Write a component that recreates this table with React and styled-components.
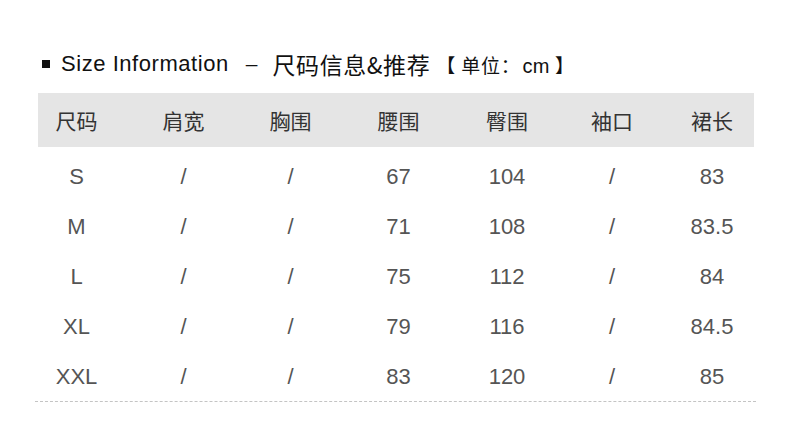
import React from 'react';
import styled, { createGlobalStyle } from 'styled-components';

const GlobalStyle = createGlobalStyle`
  html, body {
    margin: 0;
    padding: 0;
    background: #ffffff;
  }
  body {
    font-family: 'Liberation Sans', 'Noto Sans CJK SC', sans-serif;
  }
`;

const headers = ['尺码', '肩宽', '胸围', '腰围', '臀围', '袖口', '裙长'];

const rows = [
  ['S', '/', '/', '67', '104', '/', '83'],
  ['M', '/', '/', '71', '108', '/', '83.5'],
  ['L', '/', '/', '75', '112', '/', '84'],
  ['XL', '/', '/', '79', '116', '/', '84.5'],
  ['XXL', '/', '/', '83', '120', '/', '85'],
];

function App() {
  return (
    <Page>
      <GlobalStyle />
      <Title>
        <Bullet />
        <En>Size Information</En>
        <Dash>–</Dash>
        <Zh>尺码信息&amp;推荐</Zh>
        <Unit>
          【 单位：<Cm>cm</Cm> 】
        </Unit>
      </Title>
      <Table>
        <HeadBand>
          <Row>
            {headers.map((h) => (
              <HeadCell key={h}>{h}</HeadCell>
            ))}
          </Row>
        </HeadBand>
        <Body>
          {rows.map((r) => (
            <Row key={r[0]}>
              {r.map((v, i) => (
                <Cell key={i}>{v}</Cell>
              ))}
            </Row>
          ))}
        </Body>
      </Table>
    </Page>
  );
}

export default App;

const Page = styled.div`
  width: 790px;
  height: 432px;
  box-sizing: border-box;
  padding: 49px 0 0 38px;
`;

const Title = styled.div`
  display: flex;
  align-items: center;
  height: 30px;
  color: #111;
`;

const Bullet = styled.span`
  width: 8px;
  height: 8px;
  background: #111;
  margin: 0 11px 0 4px;
`;

const En = styled.span`
  font-family: 'Liberation Sans', sans-serif;
  font-size: 22px;
  letter-spacing: 0.55px;
`;

const Dash = styled.span`
  font-family: 'Liberation Sans', sans-serif;
  font-size: 21px;
  margin: 0 15px 0 17px;
`;

const Zh = styled.span`
  font-family: 'Noto Sans CJK SC', sans-serif;
  font-size: 23px;
  letter-spacing: 0.6px;
`;

const Unit = styled.span`
  font-family: 'Noto Sans CJK SC', sans-serif;
  font-size: 19px;
  letter-spacing: 0.8px;
  margin-left: 6px;
`;

const Cm = styled.span`
  font-family: 'Liberation Sans', sans-serif;
  font-size: 20px;
  letter-spacing: 0.3px;
  margin-left: 2px;
`;

const Table = styled.div`
  width: 716px;
  margin-top: 14px;
`;

const HeadBand = styled.div`
  background: #e5e5e5;
  height: 54px;
  display: flex;
  align-items: center;
`;

const Row = styled.div`
  display: grid;
  grid-template-columns: 107px 107px 107px 109px 108px 102px 98px;
  margin: 0 -7px 0 -15px;
  flex: 1;
  height: 50px;
  align-items: center;
`;

const HeadCell = styled.div`
  text-align: center;
  font-family: 'Noto Sans CJK SC', sans-serif;
  font-size: 21px;
  color: #333;
`;

const Body = styled.div`
  padding: 4px 2px 0 3px;
  margin: 0 -2px 0 -3px;
  border-bottom: 1px dashed #c4c4c4;
`;

const Cell = styled.div`
  text-align: center;
  padding-top: 2px;
  font-family: 'Liberation Sans', sans-serif;
  font-size: 22px;
  color: #555;
`;
